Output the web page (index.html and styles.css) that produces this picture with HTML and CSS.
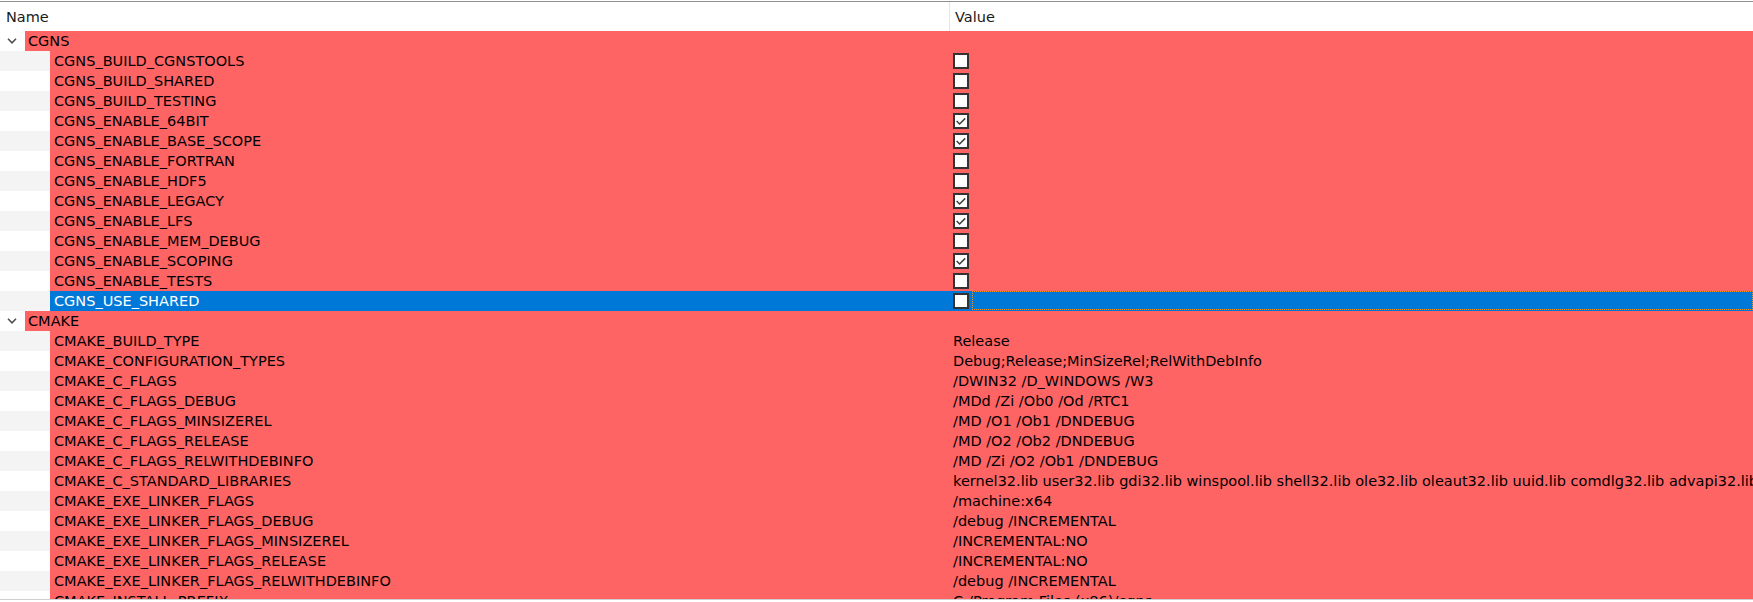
FILE: index.html
```html
<!DOCTYPE html>
<html>
<head>
<meta charset="utf-8">
<link rel="stylesheet" href="styles.css">
</head>
<body>
<div class="tree">
  <div class="header">
    <div class="hcell hname">Name</div>
    <div class="hcell hvalue">Value</div>
  </div>
  <div class="rows">
    <div class="row group">
      <div class="name"><span class="indent"><svg class="chev" width="10" height="6" viewBox="0 0 10 6"><polyline points="1,0.8 5,4.8 9,0.8" fill="none" stroke="#505050" stroke-width="1.6"/></svg></span><span class="label">CGNS</span></div>
      <div class="value"></div>
    </div>
    <div class="row alt"><div class="name"><span class="indent child"></span><span class="label">CGNS_BUILD_CGNSTOOLS</span></div><div class="value"><span class="cb"></span></div></div>
    <div class="row"><div class="name"><span class="indent child"></span><span class="label">CGNS_BUILD_SHARED</span></div><div class="value"><span class="cb"></span></div></div>
    <div class="row alt"><div class="name"><span class="indent child"></span><span class="label">CGNS_BUILD_TESTING</span></div><div class="value"><span class="cb"></span></div></div>
    <div class="row"><div class="name"><span class="indent child"></span><span class="label">CGNS_ENABLE_64BIT</span></div><div class="value"><span class="cb"><svg width="12" height="12" viewBox="0 0 12 12"><polyline points="1.6,6 4.6,9 10.2,3.4" fill="none" stroke="#404040" stroke-width="1.5"/></svg></span></div></div>
    <div class="row alt"><div class="name"><span class="indent child"></span><span class="label">CGNS_ENABLE_BASE_SCOPE</span></div><div class="value"><span class="cb"><svg width="12" height="12" viewBox="0 0 12 12"><polyline points="1.6,6 4.6,9 10.2,3.4" fill="none" stroke="#404040" stroke-width="1.5"/></svg></span></div></div>
    <div class="row"><div class="name"><span class="indent child"></span><span class="label">CGNS_ENABLE_FORTRAN</span></div><div class="value"><span class="cb"></span></div></div>
    <div class="row alt"><div class="name"><span class="indent child"></span><span class="label">CGNS_ENABLE_HDF5</span></div><div class="value"><span class="cb"></span></div></div>
    <div class="row"><div class="name"><span class="indent child"></span><span class="label">CGNS_ENABLE_LEGACY</span></div><div class="value"><span class="cb"><svg width="12" height="12" viewBox="0 0 12 12"><polyline points="1.6,6 4.6,9 10.2,3.4" fill="none" stroke="#404040" stroke-width="1.5"/></svg></span></div></div>
    <div class="row alt"><div class="name"><span class="indent child"></span><span class="label">CGNS_ENABLE_LFS</span></div><div class="value"><span class="cb"><svg width="12" height="12" viewBox="0 0 12 12"><polyline points="1.6,6 4.6,9 10.2,3.4" fill="none" stroke="#404040" stroke-width="1.5"/></svg></span></div></div>
    <div class="row"><div class="name"><span class="indent child"></span><span class="label">CGNS_ENABLE_MEM_DEBUG</span></div><div class="value"><span class="cb"></span></div></div>
    <div class="row alt"><div class="name"><span class="indent child"></span><span class="label">CGNS_ENABLE_SCOPING</span></div><div class="value"><span class="cb"><svg width="12" height="12" viewBox="0 0 12 12"><polyline points="1.6,6 4.6,9 10.2,3.4" fill="none" stroke="#404040" stroke-width="1.5"/></svg></span></div></div>
    <div class="row"><div class="name"><span class="indent child"></span><span class="label">CGNS_ENABLE_TESTS</span></div><div class="value"><span class="cb"></span></div></div>
    <div class="row alt selected"><div class="name"><span class="indent child"></span><span class="label">CGNS_USE_SHARED</span></div><div class="value"><span class="cb"></span><span class="focus"></span></div></div>
    <div class="row group">
      <div class="name"><span class="indent"><svg class="chev" width="10" height="6" viewBox="0 0 10 6"><polyline points="1,0.8 5,4.8 9,0.8" fill="none" stroke="#505050" stroke-width="1.6"/></svg></span><span class="label">CMAKE</span></div>
      <div class="value"></div>
    </div>
    <div class="row alt"><div class="name"><span class="indent child"></span><span class="label">CMAKE_BUILD_TYPE</span></div><div class="value">Release</div></div>
    <div class="row"><div class="name"><span class="indent child"></span><span class="label">CMAKE_CONFIGURATION_TYPES</span></div><div class="value">Debug;Release;MinSizeRel;RelWithDebInfo</div></div>
    <div class="row alt"><div class="name"><span class="indent child"></span><span class="label">CMAKE_C_FLAGS</span></div><div class="value">/DWIN32 /D_WINDOWS /W3</div></div>
    <div class="row"><div class="name"><span class="indent child"></span><span class="label">CMAKE_C_FLAGS_DEBUG</span></div><div class="value">/MDd /Zi /Ob0 /Od /RTC1</div></div>
    <div class="row alt"><div class="name"><span class="indent child"></span><span class="label">CMAKE_C_FLAGS_MINSIZEREL</span></div><div class="value">/MD /O1 /Ob1 /DNDEBUG</div></div>
    <div class="row"><div class="name"><span class="indent child"></span><span class="label">CMAKE_C_FLAGS_RELEASE</span></div><div class="value">/MD /O2 /Ob2 /DNDEBUG</div></div>
    <div class="row alt"><div class="name"><span class="indent child"></span><span class="label">CMAKE_C_FLAGS_RELWITHDEBINFO</span></div><div class="value">/MD /Zi /O2 /Ob1 /DNDEBUG</div></div>
    <div class="row"><div class="name"><span class="indent child"></span><span class="label">CMAKE_C_STANDARD_LIBRARIES</span></div><div class="value">kernel32.lib user32.lib gdi32.lib winspool.lib shell32.lib ole32.lib oleaut32.lib uuid.lib comdlg32.lib advapi32.lib</div></div>
    <div class="row alt"><div class="name"><span class="indent child"></span><span class="label">CMAKE_EXE_LINKER_FLAGS</span></div><div class="value">/machine:x64</div></div>
    <div class="row"><div class="name"><span class="indent child"></span><span class="label">CMAKE_EXE_LINKER_FLAGS_DEBUG</span></div><div class="value">/debug /INCREMENTAL</div></div>
    <div class="row alt"><div class="name"><span class="indent child"></span><span class="label">CMAKE_EXE_LINKER_FLAGS_MINSIZEREL</span></div><div class="value">/INCREMENTAL:NO</div></div>
    <div class="row"><div class="name"><span class="indent child"></span><span class="label">CMAKE_EXE_LINKER_FLAGS_RELEASE</span></div><div class="value">/INCREMENTAL:NO</div></div>
    <div class="row alt"><div class="name"><span class="indent child"></span><span class="label">CMAKE_EXE_LINKER_FLAGS_RELWITHDEBINFO</span></div><div class="value">/debug /INCREMENTAL</div></div>
    <div class="row"><div class="name"><span class="indent child"></span><span class="label">CMAKE_INSTALL_PREFIX</span></div><div class="value">C:/Program Files (x86)/cgns</div></div>
  </div>
  <div class="footer"></div>
</div>
</body>
</html>
```

FILE: styles.css
```css
html, body {
  margin: 0;
  padding: 0;
  background: #ffffff;
}

.tree {
  width: 1753px;
  height: 602px;
  overflow: hidden;
  font-family: "DejaVu Sans", "Noto Sans", "Noto Sans CJK SC", sans-serif;
  font-size: 14.5px;
  color: #000000;
  display: flex;
  flex-direction: column;
}

.header {
  margin-top: 1px;
  border-top: 1px solid #8f8f8f;
  height: 29px;
  display: grid;
  grid-template-columns: 949px 1fr;
  flex: none;
}

.hcell {
  display: flex;
  align-items: center;
  color: #1a1a1a;
  white-space: nowrap;
}

.hname {
  padding-left: 6px;
}

.hvalue {
  padding-left: 5px;
  border-left: 1px solid #e5e5e5;
}

.rows {
  height: 568px;
  overflow: hidden;
  flex: none;
}

.row {
  height: 20px;
  display: grid;
  grid-template-columns: 949px 1fr;
  background: #ffffff;
  line-height: 20px;
  white-space: nowrap;
}

.row.alt {
  background: #f4f4f4;
}

.name {
  display: flex;
  overflow: hidden;
}

.indent {
  flex: none;
  width: 25px;
  display: flex;
  align-items: center;
  justify-content: center;
  padding-right: 1px;
  box-sizing: border-box;
}

.indent.child {
  width: 50px;
  padding-right: 0;
}

.chev {
  display: block;
}

.label {
  flex: 1;
  background: #ff6464;
  padding-left: 3px;
  overflow: hidden;
}

.child + .label {
  padding-left: 4px;
}

.value {
  background: #ff6464;
  padding-left: 4px;
  display: flex;
  align-items: center;
  overflow: hidden;
}

.cb {
  flex: none;
  box-sizing: border-box;
  width: 16px;
  height: 16px;
  border: 2px solid #333333;
  background: #ffffff;
  display: flex;
  align-items: center;
  justify-content: center;
}

.cb svg {
  display: block;
}

.selected .label,
.selected .value {
  background: #0078d7;
}

.selected .label {
  color: #ffffff;
}

.focus {
  flex: 1;
  align-self: flex-start;
  margin-left: 3px;
  height: 19px;
  box-sizing: border-box;
  border: 1px dotted #f39a1e;
}

.footer {
  flex: none;
  height: 1px;
  background: #cfcfcf;
}
```
